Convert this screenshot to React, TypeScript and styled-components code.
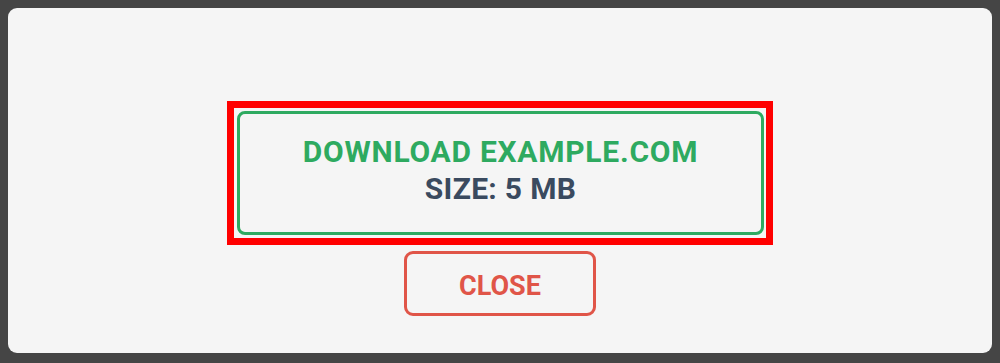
import React from "react";
import { styled, createGlobalStyle } from "styled-components";

const GlobalStyle = createGlobalStyle`
  html, body {
    margin: 0;
    padding: 0;
    background: #454545;
    font-family: Roboto, "Liberation Sans", sans-serif;
  }
`;

const App = () => {
  return (
    <>
      <GlobalStyle />
      <Backdrop>
        <Dialog>
          <Highlight>
            <DownloadButton>
              <Title>DOWNLOAD EXAMPLE.COM</Title>
              <Size>SIZE: 5 MB</Size>
            </DownloadButton>
          </Highlight>
          <CloseButton>CLOSE</CloseButton>
        </Dialog>
      </Backdrop>
    </>
  );
};

export default App;

const Backdrop = styled.div`
  width: 1000px;
  height: 363px;
  box-sizing: border-box;
  padding: 8px 8px 10px 8px;
  display: flex;
`;

const Dialog = styled.div`
  flex: 1;
  background: #f5f5f5;
  border-radius: 9px;
  display: flex;
  flex-direction: column;
  align-items: center;
  padding-top: 93px;
  gap: 6px;
`;

const Highlight = styled.div`
  border: 7px solid #ff0000;
  padding: 3px 2px 3px 3px;
`;

const DownloadButton = styled.div`
  width: 527px;
  height: 124px;
  box-sizing: border-box;
  border: 3px solid #2eaa60;
  border-radius: 8px;
  padding-bottom: 6px;
  display: flex;
  flex-direction: column;
  align-items: center;
  justify-content: center;
  gap: 4px;
`;

const Title = styled.div`
  color: #2eaa60;
  font-size: 30px;
  font-weight: 700;
  line-height: 33px;
  letter-spacing: 0.75px;
`;

const Size = styled.div`
  color: #3a4a5f;
  font-size: 30px;
  font-weight: 700;
  line-height: 33px;
  letter-spacing: 0.3px;
`;

const CloseButton = styled.button`
  width: 192px;
  height: 65px;
  box-sizing: border-box;
  background: transparent;
  border: 3px solid #e05548;
  border-radius: 9px;
  color: #e05548;
  font-family: Roboto, "Liberation Sans", sans-serif;
  font-size: 27px;
  font-weight: 700;
  padding: 4px 0 0 0;
  cursor: pointer;
`;
